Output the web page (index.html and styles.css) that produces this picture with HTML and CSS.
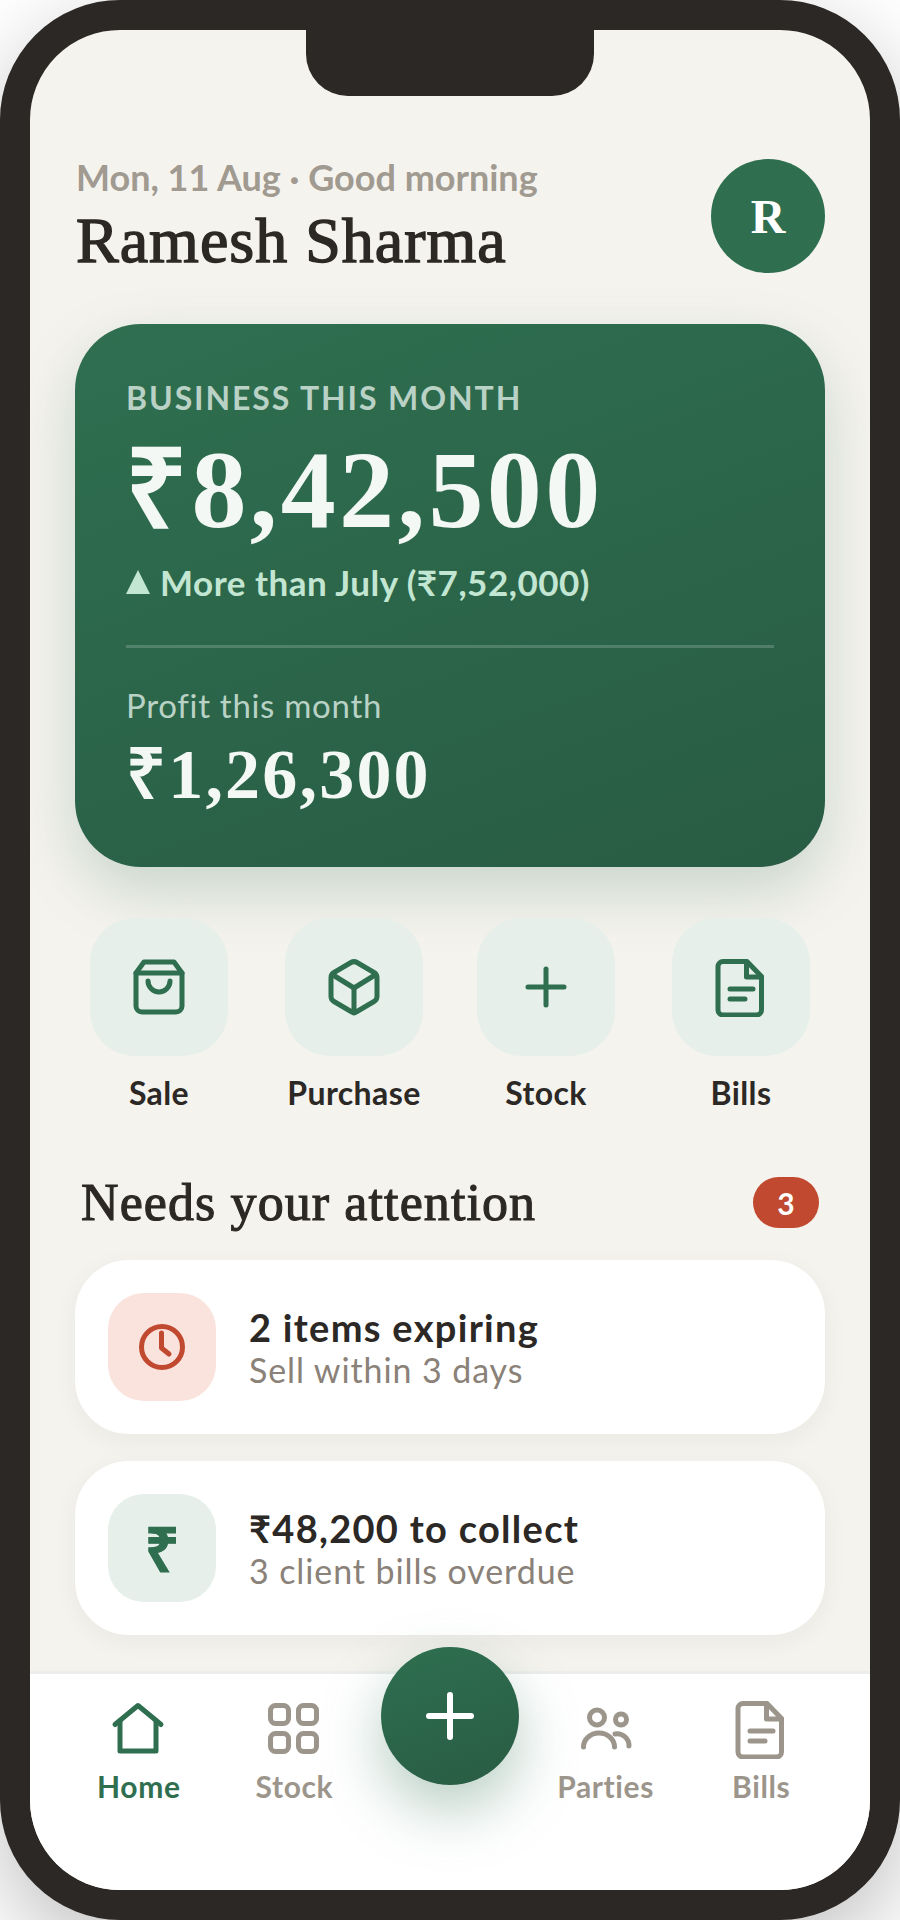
FILE: index.html
```html
<!DOCTYPE html>
<html lang="en">
<head>
    <meta charset="UTF-8">
    <meta name="viewport" content="width=device-width, initial-scale=1.0">
    <title>Home</title>
    <link rel="stylesheet" href="styles.css">
</head>
<body>
    <div class="phone">
        <div class="notch"></div>

        <main class="content">
            <header class="top">
                <div>
                    <div class="greeting">Mon, 11 Aug · Good morning</div>
                    <h1 class="name">Ramesh Sharma</h1>
                </div>
                <div class="avatar">R</div>
            </header>

            <section class="hero">
                <div class="hero-label">BUSINESS THIS MONTH</div>
                <div class="hero-amount">₹8,42,500</div>
                <div class="hero-trend"><span class="triangle"></span>More than July (₹7,52,000)</div>
                <div class="hero-line"></div>
                <div class="profit-label">Profit this month</div>
                <div class="profit-amount">₹1,26,300</div>
            </section>

            <section class="actions">
                <div class="action">
                    <div class="action-tile">
                        <svg class="icon" viewBox="0 0 60 60"><path d="M15 5h30l8 11v33a6 6 0 0 1-6 6H13a6 6 0 0 1-6-6V16z"/><path d="M7 16h46"/><path d="M19 24a11 11 0 0 0 22 0"/></svg>
                    </div>
                    <span>Sale</span>
                </div>
                <div class="action">
                    <div class="action-tile">
                        <svg class="icon" viewBox="0 0 60 60"><path d="M27 5.5a6 6 0 0 1 6 0l17 10a6 6 0 0 1 3 5v19a6 6 0 0 1-3 5l-17 10a6 6 0 0 1-6 0l-17-10a6 6 0 0 1-3-5v-19a6 6 0 0 1 3-5z"/><path d="M9 18l21 13 21-13"/><path d="M30 31v25"/></svg>
                    </div>
                    <span>Purchase</span>
                </div>
                <div class="action">
                    <div class="action-tile">
                        <svg class="icon" viewBox="0 0 60 60"><path d="M30 12v36M12 30h36"/></svg>
                    </div>
                    <span>Stock</span>
                </div>
                <div class="action">
                    <div class="action-tile">
                        <svg class="icon" viewBox="0 0 60 60"><path d="M12 4.5h24l14.5 15V53a5 5 0 0 1-5 5H12a5 5 0 0 1-5-5V9.5a5 5 0 0 1 5-5z"/><path d="M35.5 5v15h15"/><path d="M19 32h23M19 42h15"/></svg>
                    </div>
                    <span>Bills</span>
                </div>
            </section>

            <div class="section-head">
                <h2>Needs your attention</h2>
                <span class="badge">3</span>
            </div>

            <div class="alert">
                <div class="alert-tile red">
                    <svg class="icon" viewBox="0 0 60 60"><circle cx="30" cy="30" r="20.5"/><path d="M29.5 16v15l7.5 6"/></svg>
                </div>
                <div>
                    <div class="alert-title">2 items expiring</div>
                    <div class="alert-sub">Sell within 3 days</div>
                </div>
            </div>

            <div class="alert">
                <div class="alert-tile green">₹</div>
                <div>
                    <div class="alert-title">₹48,200 to collect</div>
                    <div class="alert-sub">3 client bills overdue</div>
                </div>
            </div>
        </main>

        <nav class="bottom-nav">
            <div class="nav-item active">
                <svg class="icon" viewBox="0 0 60 60"><path d="M6 25.5 29 6.5l23 19"/><path d="M11 22v30h36V22"/></svg>
                <span>Home</span>
            </div>
            <div class="nav-item">
                <svg class="icon" viewBox="0 0 60 60"><rect x="6.5" y="6.5" width="18" height="18" rx="5"/><rect x="34.5" y="6.5" width="18" height="18" rx="5"/><rect x="6.5" y="34.5" width="18" height="18" rx="5"/><rect x="34.5" y="34.5" width="18" height="18" rx="5"/></svg>
                <span>Stock</span>
            </div>
            <div class="fab">
                <svg class="icon" viewBox="0 0 60 60"><path d="M30 9v42M9 30h42"/></svg>
            </div>
            <div class="nav-item">
                <svg class="icon" viewBox="0 0 60 60"><circle cx="21" cy="18.5" r="7.5"/><circle cx="45" cy="20.5" r="5.5"/><path d="M7.5 48a15.5 14 0 0 1 31 0"/><path d="M39 35a12 12 0 0 1 14 12"/></svg>
                <span>Parties</span>
            </div>
            <div class="nav-item">
                <svg class="icon" viewBox="0 0 60 60"><path d="M12 4.5h24l14.5 15V53a5 5 0 0 1-5 5H12a5 5 0 0 1-5-5V9.5a5 5 0 0 1 5-5z"/><path d="M35.5 5v15h15"/><path d="M19 32h23M19 42h15"/></svg>
                <span>Bills</span>
            </div>
        </nav>
    </div>
</body>
</html>
```

FILE: styles.css
```css
body {
    margin: 0;
    background-color: #ffffff;
    font-family: 'Lato', sans-serif;
    color: #2b2825;
}

.phone {
    box-sizing: border-box;
    width: 900px;
    height: 1920px;
    display: flex;
    flex-direction: column;
    overflow: hidden;
    background-color: #f5f3ee;
    border: 30px solid #2b2825;
    border-radius: 120px;
    box-shadow: 0 30px 90px rgba(0, 0, 0, 0.25);
}

.notch {
    flex: none;
    width: 288px;
    height: 66px;
    margin: 0 auto;
    background-color: #2b2825;
    border-radius: 0 0 42px 42px;
}

.content {
    flex: 1;
    padding: 60px 45px 0;
}

.icon {
    width: 60px;
    height: 60px;
    fill: none;
    stroke: currentColor;
    stroke-width: 5;
    stroke-linecap: round;
    stroke-linejoin: round;
}

/* header */
.top {
    display: flex;
    justify-content: space-between;
    align-items: center;
}

.top > div:first-child {
    padding-left: 1px;
}

.greeting {
    font-size: 36px;
    font-weight: 700;
    line-height: 42px;
    color: #a09a90;
}

.name {
    margin: 8px 0 0;
    font-family: 'Liberation Serif', serif;
    font-size: 64px;
    font-weight: 400;
    line-height: 70px;
    letter-spacing: 1px;
    -webkit-text-stroke: 1.4px #2b2825;
}

.avatar {
    width: 114px;
    height: 114px;
    display: flex;
    justify-content: center;
    align-items: center;
    border-radius: 50%;
    background-color: #2f6f50;
    color: #ffffff;
    font-family: 'Liberation Serif', serif;
    font-size: 48px;
    font-weight: 700;
}

/* big green card */
.hero {
    box-sizing: border-box;
    height: 543px;
    margin-top: 48px;
    padding: 54px 51px 0;
    border-radius: 66px;
    background: linear-gradient(160deg, #2f6f50, #285c43);
    box-shadow: 0 24px 60px rgba(47, 111, 80, 0.22);
    color: #f3f8f5;
}

.hero-label {
    font-size: 32px;
    font-weight: 700;
    line-height: 40px;
    letter-spacing: 1.9px;
    color: #b9d2c5;
}

.hero-amount {
    margin: 10px 0 0 -1px;
    font-family: 'Liberation Serif', serif;
    font-size: 110px;
    font-weight: 700;
    line-height: 124px;
    letter-spacing: 3.4px;
}

.hero-trend {
    display: flex;
    align-items: center;
    gap: 10px;
    margin-top: 8px;
    font-size: 35px;
    font-weight: 700;
    line-height: 44px;
    letter-spacing: 0.5px;
    color: #c3e6d3;
}

.triangle {
    width: 0;
    height: 0;
    border-left: 12.5px solid transparent;
    border-right: 12.5px solid transparent;
    border-bottom: 24px solid #c3e6d3;
}

.hero-line {
    height: 3px;
    margin-top: 41px;
    background-color: rgba(255, 255, 255, 0.18);
}

.profit-label {
    margin-top: 36px;
    font-size: 33px;
    line-height: 42px;
    letter-spacing: 0.7px;
    color: #b9d2c5;
}

.profit-amount {
    margin-top: 7px;
    font-family: 'Liberation Serif', serif;
    font-size: 70px;
    font-weight: 700;
    line-height: 84px;
    letter-spacing: 2.2px;
}

/* quick actions */
.actions {
    display: grid;
    grid-template-columns: 195px 192px 195px 138px;
    margin: 51px 0 0 15px;
}

.action {
    width: 138px;
    display: flex;
    flex-direction: column;
    align-items: center;
    font-size: 32px;
    font-weight: 700;
    line-height: 40px;
    letter-spacing: 0.4px;
}

.action-tile {
    width: 138px;
    height: 138px;
    display: flex;
    justify-content: center;
    align-items: center;
    margin-bottom: 17px;
    border-radius: 45px;
    background-color: #e6efe9;
    color: #2f6f50;
}

/* attention list */
.section-head {
    display: flex;
    justify-content: space-between;
    align-items: center;
    margin: 64px 6px 32px;
}

.section-head h2 {
    margin: 0;
    font-family: 'Liberation Serif', serif;
    font-size: 52px;
    font-weight: 400;
    line-height: 51px;
    letter-spacing: 1.1px;
    -webkit-text-stroke: 1.1px #2b2825;
}

.badge {
    width: 66px;
    height: 51px;
    display: flex;
    justify-content: center;
    align-items: center;
    border-radius: 26px;
    background-color: #c0492f;
    color: #ffffff;
    font-size: 30px;
    font-weight: 700;
}

.alert {
    display: flex;
    align-items: center;
    gap: 33px;
    height: 174px;
    margin-bottom: 27px;
    padding: 0 33px;
    border-radius: 54px;
    background-color: #ffffff;
    box-shadow: 0 6px 24px rgba(43, 40, 37, 0.05);
}

.alert-tile {
    width: 108px;
    height: 108px;
    display: flex;
    justify-content: center;
    align-items: center;
    border-radius: 36px;
}

.alert-tile.red {
    background-color: #fae3dd;
    color: #c0492f;
}

.alert-tile.green {
    background-color: #e6efe9;
    color: #2f6f50;
    font-family: 'Liberation Serif', serif;
    font-size: 60px;
    font-weight: 700;
    -webkit-text-stroke: 1px #2f6f50;
}

.alert-title {
    font-size: 38px;
    font-weight: 700;
    line-height: 44px;
    letter-spacing: 1.3px;
}

.alert-sub {
    margin-top: 1px;
    font-size: 34px;
    line-height: 40px;
    letter-spacing: 0.9px;
    color: #8a8178;
}

/* bottom nav */
.bottom-nav {
    flex: none;
    height: 219px;
    box-sizing: border-box;
    display: grid;
    grid-template-columns: repeat(5, 1fr);
    padding: 0 31px;
    background-color: #ffffff;
    border-top: 3px solid #eceeec;
}

.nav-item {
    display: flex;
    flex-direction: column;
    align-items: center;
    gap: 9px;
    padding-top: 25px;
    font-size: 30px;
    font-weight: 700;
    line-height: 36px;
    letter-spacing: 0.6px;
    color: #9c958b;
}

.nav-item.active {
    color: #2f6f50;
}

.fab {
    justify-self: center;
    width: 138px;
    height: 138px;
    margin-top: -27px;
    display: flex;
    justify-content: center;
    align-items: center;
    border-radius: 50%;
    background: linear-gradient(160deg, #2f6f50, #285c43);
    box-shadow: 0 24px 60px rgba(47, 111, 80, 0.35);
    color: #ffffff;
}

.fab .icon {
    stroke-width: 6;
}
```
